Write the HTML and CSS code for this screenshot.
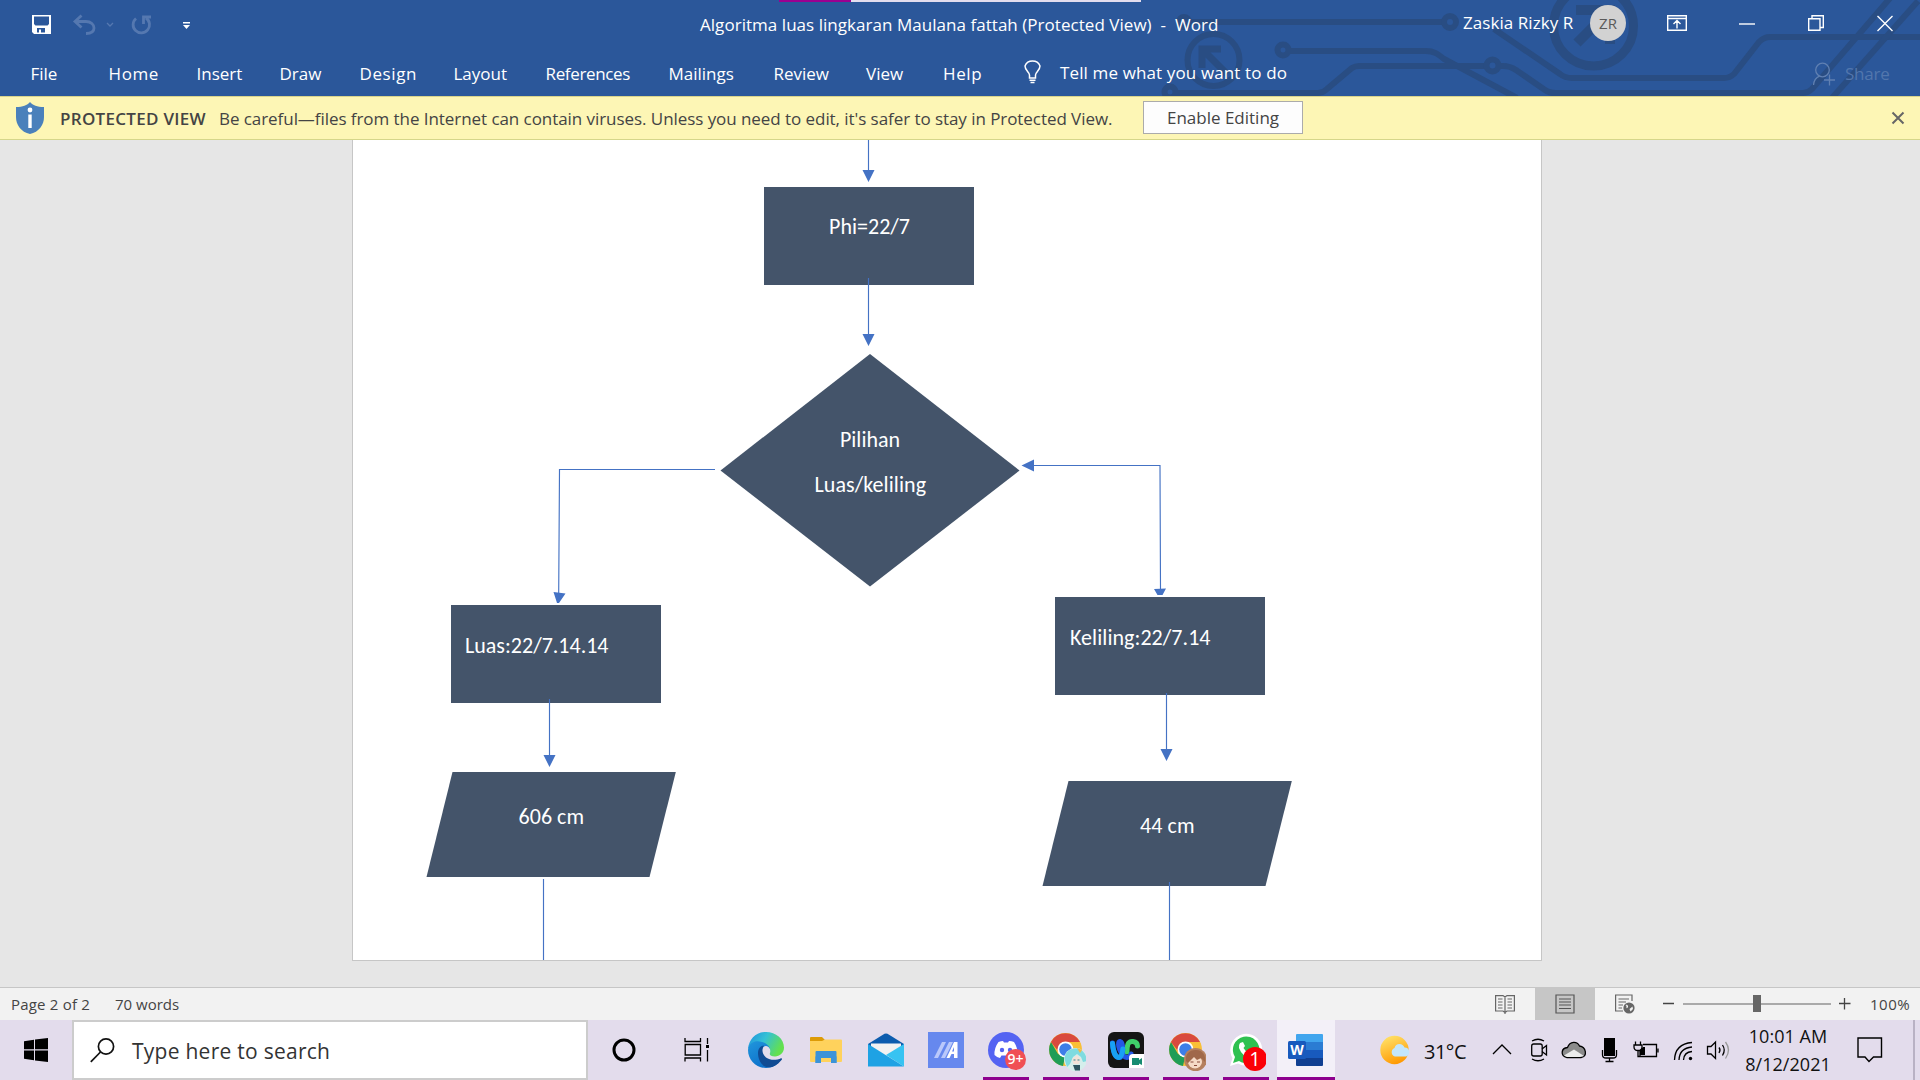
FILE: index.html
```html
<!DOCTYPE html>
<html lang="en">
<head>
<meta charset="utf-8">
<title>Algoritma luas lingkaran Maulana fattah - Word</title>
<link rel="stylesheet" href="styles.css">
</head>
<body>
<div class="window">
  <header class="header">
    <svg class="circuit" viewBox="1160 0 760 96" width="760" height="96" fill="none" stroke="#294d83" stroke-width="6">
      <path d="M1190 22H1444"/><circle cx="1184" cy="22" r="5"/><circle cx="1450" cy="22" r="6"/>
      <circle cx="1213.500" cy="60" r="26" stroke-width="6"/>
      <path d="M1202 68V49H1221M1203 50L1227 74" stroke-width="7"/>
      <circle cx="1283" cy="50" r="5.500"/><path d="M1289 51H1426C1434 51 1438 54 1444 59L1517 98"/>
      <circle cx="1170" cy="92" r="5.500"/><path d="M1177 93H1318Q1323 93 1327 89L1352 68Q1355 66 1359 66H1486"/>
      <circle cx="1492.500" cy="65.500" r="6"/><path d="M1499 66H1503Q1510 66 1516 70L1545 90Q1549 93 1556 93H1803Q1808 93 1812 89L1891 -3"/>
      <path d="M1494 29L1560 74Q1565 78 1572 78H1724Q1730 78 1734 74L1759 42Q1764 37 1770 37H1922"/>
      <path d="M1832 98L1918 1"/>
      <circle cx="1593.500" cy="26" r="40" stroke-width="9"/>
      <path d="M1576 10H1610V44M1608 12L1577 43" stroke-width="10"/>
    </svg>
    <div class="top-strip"></div>
    <div class="titlebar">
      <svg class="quick" width="200" height="48" viewBox="0 0 200 48" fill="none">
        <path fill="#fff" fill-rule="evenodd" d="M32 15H51V34H34L32 32ZM34 16.500V24L35.500 25.500H47.500L49 24V16.500ZM37 28V32.500H39V29.500H41V32.500H45V28Z"/>
        <g stroke="#5578b0" stroke-width="2.800">
          <path d="M75 21.500H86C91 21.500 94 24.500 94 28S91 33.500 86 33.500"/><path d="M81.500 15.500L75 21.500L81.500 27.500"/>
          <path d="M107 23L110 26L113 23" stroke-width="1.300"/>
          <path d="M136 18.500A8.200 8.200 0 1 0 146 18"/><path d="M151 17H143.500V24"/>
        </g>
        <path d="M183 22H190V23.500H183ZM183 25H190L186.500 29Z" fill="#fff"/>
      </svg>
      <div class="title">Algoritma luas lingkaran Maulana fattah (Protected View)&nbsp; -&nbsp; Word</div>
      <div class="user">Zaskia Rizky R</div>
      <div class="avatar">ZR</div>
      <svg class="controls" width="260" height="48" viewBox="1660 0 260 48" fill="none" stroke="#fff" stroke-width="1.400">
        <path d="M1667.700 15.700H1686.300V30.300H1667.700ZM1667.700 18.500H1686.300M1677 28.500V20.500M1673.500 24L1677 20.500L1680.500 24"/>
        <path d="M1739 24H1755"/>
        <path d="M1812 18.500V15.700H1823.300V27.500H1820M1808.700 18.700H1820V30.300H1808.700Z"/>
        <path d="M1877.500 16L1892.500 31M1892.500 16L1877.500 31"/>
      </svg>
    </div>
    <nav class="ribbon">
      <span>File</span><span class="loose">Home</span><span>Insert</span><span>Draw</span><span class="loose">Design</span><span>Layout</span><span class="tight">References</span><span>Mailings</span><span>Review</span><span>View</span><span class="loose">Help</span>
      <svg width="20" height="28" viewBox="0 0 20 28" fill="none" stroke="#fff" stroke-width="1.500"><path d="M5.500 20V17C5.500 14.500 1 12.500 1 8A8 7.600 0 0 1 16 8C16 12.500 11.500 14.500 11.500 17V20ZM5.500 22.200H11.500M6.500 24.500H10.500"/></svg>
      <span class="tell">Tell me what you want to do</span>
      <svg class="person" width="24" height="24" viewBox="0 0 24 24" fill="none" stroke="#6080b2" stroke-width="1.300"><circle cx="10.500" cy="8" r="6.800"/><path d="M1.500 23C2 18 4 15.500 7.500 14.200M17.500 12.500V23.500M12 18H23"/></svg>
      <span class="share">Share</span>
    </nav>
  </header>

  <div class="notice">
    <svg class="shield" width="28" height="32" viewBox="0 0 28 32"><path fill="#4a80bb" d="M14 0C17 3.500 21 5 28 5V15C28 23 23 30 14 32C5 30 0 23 0 15V5C7 5 11 3.500 14 0Z"/><circle cx="14" cy="8" r="2.400" fill="#fff"/><path d="M12.300 12.500H15.700V26H12.300Z" fill="#fff"/></svg>
    <strong>PROTECTED VIEW</strong>
    <span class="warning">Be careful—files from the Internet can contain viruses. Unless you need to edit, it's safer to stay in Protected View.</span>
    <button class="enable">Enable Editing</button>
    <svg class="dismiss" width="14" height="14" viewBox="0 0 14 14" stroke="#666" stroke-width="2"><path d="M1.500 1.500L12.500 12.500M12.500 1.500L1.500 12.500"/></svg>
  </div>

  <main class="canvas">
    <div class="page">
      <svg class="chart" width="1188" height="820" viewBox="353 140 1188 820">
        <g fill="#44546a">
          <path d="M764 187H974V285H764Z"/>
          <path d="M870 354L1019.500 470.500L870 586.500L720.500 470.500Z"/>
          <path d="M451 605H661V703H451Z"/>
          <path d="M1055 597H1265V695H1055Z"/>
          <path d="M452.500 772H675.800L649.500 877H426.500Z"/>
          <path d="M1068.500 781H1291.800L1265.500 886H1042.500Z"/>
        </g>
        <g fill="none" stroke="#4472c4" stroke-width="1.150">
          <path d="M868.500 140V172M868.500 278V336M715 469.500H559.500L558.700 593M1033 465.500H1160L1160.500 590M549.500 699V756M1166.500 693V750M543.500 879V960M1169.500 882V960"/>
        </g>
        <g fill="#4472c4">
          <path d="M862.500 170H874.500L868.500 182ZM862.500 334H874.500L868.500 346ZM543.500 755H555.500L549.500 767ZM1160.500 749H1172.500L1166.500 761ZM553.500 592L565.500 593.500L559 603H557ZM1154 589L1166 588.500L1162.500 595H1157.500ZM1021.500 465.500L1034 459.500V471.500Z"/>
        </g>
        <g class="labels">
          <text x="829" y="234" textLength="81">Phi=22/7</text>
          <text x="840" y="447" textLength="60">Pilihan</text>
          <text x="814.500" y="492" textLength="111.500">Luas/keliling</text>
          <text x="465" y="653" textLength="143.500">Luas:22/7.14.14</text>
          <text x="1070" y="645" textLength="140.500">Keliling:22/7.14</text>
          <text x="518.500" y="824" textLength="65.500">606 cm</text>
          <text x="1140" y="833" textLength="54.500">44 cm</text>
        </g>
      </svg>
    </div>
  </main>

  <footer class="status">
    <span class="pages">Page 2 of 2</span><span>70 words</span>
    <div class="views">
      <div class="view"><svg width="20" height="20" viewBox="0 0 20 20" fill="none" stroke="#666" stroke-width="1.200"><path d="M.6 1.600H8L10 3L12 1.600H19.400V17H12L10 18.500L8 17H.6ZM10 3V20M3 5H7.500M3 8H7.500M3 11H7.500M3 14H7.500M12.500 5H17M12.500 8H17M12.500 11H17M12.500 14H17"/></svg></div>
      <div class="view selected"><svg width="20" height="20" viewBox="0 0 20 20" fill="none" stroke="#555" stroke-width="1.200"><path d="M1 1H19V19H1ZM4 5H16M4 8H16M4 11H16M4 14.500H16"/></svg></div>
      <div class="view"><svg width="20" height="20" viewBox="0 0 20 20" fill="none" stroke="#666" stroke-width="1.200"><path d="M8 17H.6V1H17V7M3.500 5H14M3.500 8H11M3.500 11H8M3.500 14H7"/><circle cx="14" cy="14" r="5.600" fill="#666" stroke="none"/><path d="M10.500 11C12 10 13.500 11.500 13 13S11 15 11.500 12ZM14.500 15L17.500 12.500L18 15L15.500 17.500Z" fill="#f2f2f2" stroke="none"/></svg></div>
    </div>
    <svg class="zoom" width="192" height="20" viewBox="1661 994 192 20" fill="none" stroke="#444" stroke-width="1.300"><path d="M1683 1004H1831" stroke="#aaa" stroke-width="2"/><path d="M1663 1003.500H1674M1839 1003.500H1850.500M1844.500 998V1009.500"/><path d="M1753 995H1761V1012H1753Z" fill="#666" stroke="none"/></svg>
    <span class="percent">100%</span>
  </footer>

  <div class="taskbar">
    <div class="start"><svg width="24" height="24" viewBox="0 0 24 24"><path d="M0 3.200L10 1.800V11.300H0ZM11 1.600L24 0V11.300H11ZM0 12.500H10V22.200L0 20.800ZM11 12.500H24V24L11 22.400Z"/></svg></div>
    <div class="search"><svg width="25" height="25" viewBox="0 0 25 25" fill="none" stroke="#111" stroke-width="1.700"><circle cx="16" cy="8.500" r="7.600"/><path d="M10.500 14L.8 23.800"/></svg><span>Type here to search</span></div>
    <div class="slot wide"><svg width="24" height="24" viewBox="0 0 24 24" fill="none"><circle cx="12" cy="12" r="10" stroke="#000" stroke-width="3"/></svg></div>
    <div class="slot wide taskview"><svg width="26" height="24" viewBox="0 0 26 24" fill="none" stroke="#000" stroke-width="1.300"><path d="M1 0V3.500H16.500V0M1.200 6.500H16.500V17H1.200ZM1 23.500V20H16.500V23.500M23.500 0V6M23.500 12V23.500"/><path d="M22 7H25V10H22Z" fill="#000" stroke="none"/></svg></div>

    <div class="slot"><svg width="36" height="36" viewBox="0 0 36 36">
      <defs><linearGradient id="e1" x1="0" y1="0" x2="1" y2=".4"><stop offset="0" stop-color="#1e8ede"/><stop offset=".5" stop-color="#34c1d5"/><stop offset="1" stop-color="#63e04f"/></linearGradient><linearGradient id="e2" x1="0" y1="0" x2=".8" y2="1"><stop offset="0" stop-color="#2196dc"/><stop offset="1" stop-color="#0868c6"/></linearGradient></defs>
      <path fill="url(#e1)" d="M0 17C1 7 8 0 18 0C28 0 36 7 36 15.500C36 21 31.500 24.500 27 24.500C23 24.500 21 23 22 21C23 18 21.500 13 16 13C9 10 3 12 0 17Z"/>
      <path fill="url(#e2)" d="M0 18C1 10 8 8 14 10C19 11 22 15 22 17C20 13 15 13 14 18C13 24 18 30 26 30C29 30 31 29 33 27C30 33 24 36 18 36C8 36 0 28 0 18Z"/>
      <path fill="#104b93" d="M10 21C10 17 12 14 16 13.500C13.500 17 14 22 18 25.500C23 29 29 28 33 26.200C34 26 34.500 27 33.500 28C28 35 21 37 16 34C12 31 10 26 10 21Z"/></svg></div>
    <div class="slot"><svg width="32" height="28" viewBox="0 0 32 28"><path fill="#dd9b07" d="M0 2Q0 1 1 1H12L15 4L13 7H0Z"/><path fill="#ffd25c" d="M0 5H12L15 3.500H31Q32 3.500 32 4.500V25Q32 26 31 26H1Q0 26 0 25Z"/><path fill="#3c93d8" d="M5.500 27V21Q5.500 20 6.500 20H25.500Q26.500 20 26.500 21V27H21V22H11V27Z"/><path fill="#3c93d8" d="M5.500 27V16Q5.500 15 6.500 15H25.500Q26.500 15 26.500 16V27H21V20H11V27Z"/></svg></div>
    <div class="slot"><svg width="36" height="34" viewBox="0 0 36 34"><path fill="#0c5cae" d="M0 11L16.500 .8Q18 0 19.500 .8L36 11V15H0Z"/><path fill="#f2f2f2" d="M3 10.500H33V18L18 26L3 18Z"/><path fill="#1ea2e4" d="M0 11L36 33.500H0Z"/><path fill="#37c3f2" d="M36 11L18 22L36 33.500Z"/></svg></div>
    <div class="slot"><svg width="36" height="36" viewBox="0 0 36 36"><path fill="#6688ee" d="M0 0H36V36H0Z"/><path fill="#b9c8fb" d="M6 26L14 10H18L10 26ZM13 26L21 10H25L17 26Z"/><path fill="#fff" fill-rule="evenodd" d="M18.500 26L26 10H29.500V26H26V22H23.500L21.500 26ZM26 15L24 19.500H26Z"/></svg></div>
    <div class="slot running"><svg width="40" height="44" viewBox="0 -2 40 44"><circle cx="20" cy="20" r="18" fill="#5463f2"/><path fill="#fff" d="M12.500 12Q15 11 17 11L18 12.500H22L23 11Q26 11 28 12Q32 18 31.500 25Q29 27.500 26 28L24.500 25.500H15.500L14 28Q11 27.500 8.500 25Q8 18 12.500 12Z"/><circle cx="16" cy="20" r="2.200" fill="#5463f2"/><circle cx="24" cy="20" r="2.200" fill="#5463f2"/><circle cx="29.500" cy="29.500" r="10.500" fill="#f04f54"/><text x="29.500" y="34" class="badge small">9+</text></svg></div>
    <div class="slot running"><svg width="40" height="44" viewBox="0 -2 40 44"><use href="#chrome"/><circle cx="29.500" cy="29.500" r="11.500" fill="#d5eeec"/><path fill="#7fdbe0" d="M18.500 29C19 22 24 18 30 18.500C37 19 41 25 40.500 31L37 32L35 27L31 24L27 27L24 34L21 37Z"/><path fill="#f3e2d8" d="M26 29L31 25L34.500 29L33 34H27.500Z"/><path d="M27.500 30H29.500M31.500 30H33.500" stroke="#3a8791"/><path fill="#2d5560" d="M27 35H34V40.500H29Z"/><path fill="#f5b944" d="M31 18L36 20L34 23Z"/></svg></div>
    <div class="slot running"><svg width="40" height="44" viewBox="0 -2 40 44"><rect x="2" y="2" width="36" height="36" rx="6" fill="#151515"/><g fill="none" stroke-width="5" stroke-linecap="round"><path d="M21 22C21 13 23 11 27 11.500C31 12 31.500 14 31.500 16" stroke="#3fd06a"/><path d="M6.500 13C7 20 9 27.500 13 27.500C18 27.500 17.500 12 14 11.500C10 12 15 27 21 27.500C24 27.500 24.500 26 25 24" stroke="#2457e6"/><path d="M6.500 13.500C7 20 9 27.500 13 27.500C16 27 16.500 22 16.800 19" stroke="#18a0f5"/></g><path fill="#fff" d="M23 28Q23 24 27 24H38V38H23Z"/><path fill="#168b72" d="M26 28H33V30L36 28V35L33 33.500V35H26Z"/></svg></div>
    <div class="slot running"><svg width="40" height="44" viewBox="0 -2 40 44"><use href="#chrome"/><circle cx="29.500" cy="29.500" r="11.500" fill="#b5805f"/><ellipse cx="29" cy="32" rx="7" ry="6.500" fill="#f6dac6"/><path fill="#a0684a" d="M20 31C19 24 24 19.500 30 20C37 20 40 26 39 32L35 28L31 30L28 27L25 30L22 33Z"/><path d="M24.500 32H27.500M31 32H34M28 35.500H31" stroke="#8a4a3a"/></svg></div>
    <div class="slot running"><svg width="40" height="44" viewBox="0 -2 40 44"><path fill="#fff" d="M4 36L6.500 28A16 16 0 1 1 12 33.500Z"/><path fill="#2fc150" d="M7 33L9 27A13.300 13.300 0 1 1 13 31Z"/><path fill="#fff" d="M14 13L17 12L19 16L17.500 18Q20 22 23 24L25 22L28 24Q28 28 24 28Q16 26 13 18Q12.500 15 14 13Z"/><circle cx="29" cy="29" r="12" fill="#fb0007"/><text x="29" y="36" class="badge">1</text></svg></div>
    <div class="slot running active"><svg width="36" height="34" viewBox="0 0 36 34"><path fill="#41a5ee" d="M8 2Q8 1 9 1H34Q35 1 35 2V9H8Z"/><path fill="#2b7cd3" d="M8 9H35V17H8Z"/><path fill="#185abd" d="M8 17H35V25H8Z"/><path fill="#103f91" d="M8 25H35V32Q35 33 34 33H9Q8 33 8 32Z"/><rect y="8" width="18" height="18" rx="1.500" fill="#185abd"/><text x="9" y="21.800" class="badge word">W</text></svg></div>

    <div class="tray">
      <svg class="weather" width="32" height="30" viewBox="0 0 32 30"><defs><linearGradient id="s" x1=".2" y1="0" x2=".6" y2="1"><stop stop-color="#ffe36b"/><stop offset="1" stop-color="#ff9800"/></linearGradient></defs><circle cx="14.500" cy="15" r="14.200" fill="url(#s)"/><path fill="#c3e6fb" d="M15 21.500A4.500 4.500 0 0 1 14.500 13Q15.500 9 19.500 9Q23 9 24.500 12.500A4.600 4.600 0 0 1 26 21.500Z"/></svg>
      <span class="temp">31°C</span>
      <svg class="icons" width="246" height="30" viewBox="1488 1035 246 30" fill="none" stroke="#000" stroke-width="1.300">
        <path d="M1493 1054L1502 1045L1511 1054"/>
        <rect x="1531.700" y="1044" width="10.500" height="12" rx="2"/><path d="M1542 1049L1546.500 1045.500V1055L1542 1051.500M1532 1041Q1538 1037.500 1544 1041M1532 1059Q1538 1062.500 1544 1059"/>
        <path d="M1567 1057.500C1560 1056 1561 1048 1567.500 1047.500C1570 1041 1577 1041 1579.500 1046C1586 1047 1588 1056 1581 1057.500Z" fill="#8b8b8b"/><path d="M1564 1055.500L1574 1049.500L1584 1056L1580 1057H1567Z" fill="#ececec" stroke="none"/>
        <path d="M1604 1038H1615V1056H1604Z" fill="#000" stroke="none"/><path d="M1602.500 1050V1055Q1602.500 1058 1606 1058H1613Q1616.500 1058 1616.500 1055V1050M1609.500 1058V1061.500M1605.500 1061.500H1613.500"/>
        <path d="M1643 1044.500H1656.500V1056.500H1640V1051M1658 1048.500V1052.500M1635.500 1041.500V1045M1640.500 1041.500V1045M1634 1045H1642V1047Q1642 1050.500 1638 1050.500T1634 1047ZM1638 1051V1056.500H1640"/><path d="M1640 1050L1643 1047H1645V1055H1640Z" fill="#000" stroke="none"/>
        <path d="M1674.500 1060Q1675 1044 1692 1042.500M1679 1060Q1679.500 1048 1692 1047M1683.500 1060Q1684 1052 1692 1051.500"/><circle cx="1690.500" cy="1058.500" r="1.700" fill="#000" stroke="none"/>
        <path d="M1707.500 1046.500H1711L1715.500 1042V1058.500L1711 1054H1707.500ZM1719 1047.500Q1721 1050 1719 1053M1722.500 1045Q1726 1050 1722.500 1055.500"/><path d="M1725.500 1042Q1731.500 1050 1725.500 1058.500" stroke="#999"/>
      </svg>
      <div class="clock"><span>10:01 AM</span><span>8/12/2021</span></div>
      <svg class="bubble" width="26" height="26" viewBox="0 0 26 26" fill="none" stroke="#000" stroke-width="1.400"><path d="M1 1H24.500V20H16.500L12 24.500L8 20H1Z"/></svg>
    </div>
  </div>
</div>
<svg width="0" height="0" class="symbols"><symbol id="chrome" viewBox="0 0 40 44"><circle cx="19.500" cy="19.500" r="16.500" fill="#f9bf36"/><path fill="#1f9d57" d="M5 12L12 24L19 27L17 36A16.500 16.500 0 0 1 5 12Z"/><path fill="#d94a3e" d="M5 12A16.500 16.500 0 0 1 34 12H19.500A8 8 0 0 0 12 21Z"/><circle cx="19.500" cy="19.500" r="8" fill="#fff"/><circle cx="19.500" cy="19.500" r="6.300" fill="#3d7ee8"/></symbol></svg>
</body>
</html>
```
FILE: styles.css
```css
* { box-sizing: border-box; }
body { margin: 0; font: 17px "Open Sans", "Noto Sans", sans-serif; overflow: hidden; }
svg { display: block; flex: none; }
.window { width: 1920px; height: 1080px; display: flex; flex-direction: column; white-space: nowrap; }

.header { position: relative; height: 96px; background: #2b579a; color: #fff; flex: none; }
.circuit { position: absolute; right: 0; top: 0; }
.top-strip { position: absolute; left: 779px; top: 0; width: 362px; height: 2px; background: linear-gradient(90deg, #9b0091 72px, #e3ddee 72px); }
.titlebar { position: relative; height: 48px; display: flex; align-items: center; }
.title { margin-left: 500px; width: 763px; letter-spacing: .04px; }
.user { width: 127px; margin-top: -3px; letter-spacing: .06px; }
.avatar { width: 36px; height: 36px; margin-top: -2px; border-radius: 50%; background: #d2d2d2; color: #5a5a5a; font-size: 15px; line-height: 36px; text-align: center; }
.controls { margin-left: auto; }
.ribbon { position: relative; height: 48px; padding-left: 30.500px; display: grid; align-items: center; grid-template-columns: 78px 88px 83px 80px 94px 92px 123px 105px 92.500px 77px 80.500px 36.500px 752px 33px 1fr; }
.ribbon span { margin-top: 3px; }
.ribbon .loose { letter-spacing: .6px; }
.ribbon .tight { letter-spacing: -.35px; }
.ribbon .tell { letter-spacing: .13px; margin-top: 1px; }
.ribbon .person { margin-top: 4px; }
.ribbon .share { color: #5276ad; letter-spacing: -.2px; }

.notice { height: 44px; flex: none; background: #fdf6b5; border-top: 1px solid #d9d48c; border-bottom: 1px solid #d5d68a; display: flex; align-items: center; color: #444; padding: 0 15px 0 16px; }
.notice strong { font-weight: 600; letter-spacing: .29px; margin-left: 16px; width: 159px; }
.warning { width: 924px; letter-spacing: -.06px; }
.enable { width: 160px; height: 33px; padding: 0; margin-top: -2px; background: #fdfdfd; border: 1px solid #ababab; color: #444; font: inherit; line-height: 29px; }
.dismiss { margin-left: auto; }

.canvas { flex: 1; background: #e6e6e6; padding-left: 352px; }
.page { width: 1190px; height: 821px; background: #fff; border: 1px solid #c6c6c6; border-top: 0; }
.labels { fill: #fff; font: 22px Carlito, Lato, sans-serif; }

.status { height: 33px; flex: none; border-top: 1px solid #c6c6c6; background: #f2f2f2; display: flex; align-items: center; font-size: 15px; color: #444; padding-left: 11px; }
.pages { width: 104px; letter-spacing: .2px; }
.views { display: flex; height: 32px; margin-left: auto; }
.view { width: 60px; display: flex; align-items: center; justify-content: center; }
.selected { background: #c6c6c6; }
.zoom { margin-left: 6px; }
.percent { width: 67px; padding-left: 17px; letter-spacing: .5px; }

.taskbar { height: 60px; flex: none; background: #e3dcec; display: flex; color: #111; }
.start { width: 72px; display: flex; align-items: center; justify-content: center; }
.search { width: 516px; border: 2px solid #ccc; background: #fff; display: flex; align-items: center; padding-left: 16px; gap: 17px; font-size: 21px; letter-spacing: .26px; color: #333; }
.search span { padding-top: 2px; }
.slot { width: 60px; display: flex; align-items: center; justify-content: center; }
.slot.wide { width: 72px; }
.slot.taskview { width: 76px; padding-right: 3px; }
.running { background: linear-gradient(#8e008e, #8e008e) center bottom / 46px 3px no-repeat; }
.active { width: 58px; margin-left: 1px; background-color: #f3f0f8; background-size: 58px 3px; }
.badge { fill: #fff; font: 20px "Open Sans", sans-serif; text-anchor: middle; }
.badge.small { font-size: 14px; font-weight: 600; }
.badge.word { font-size: 14px; font-weight: 700; }
.tray { margin-left: auto; width: 535px; display: flex; align-items: center; border-right: 2px solid #b9b2c4; margin-right: 5px; }
.temp { width: 64px; margin-left: 12px; padding-top: 3px; font-size: 20px; letter-spacing: -.5px; }
.clock { width: 108px; display: flex; flex-direction: column; align-items: center; font-size: 18px; line-height: 28px; letter-spacing: .05px; }
.bubble { margin-left: 15px; }
.symbols { position: absolute; }
```
